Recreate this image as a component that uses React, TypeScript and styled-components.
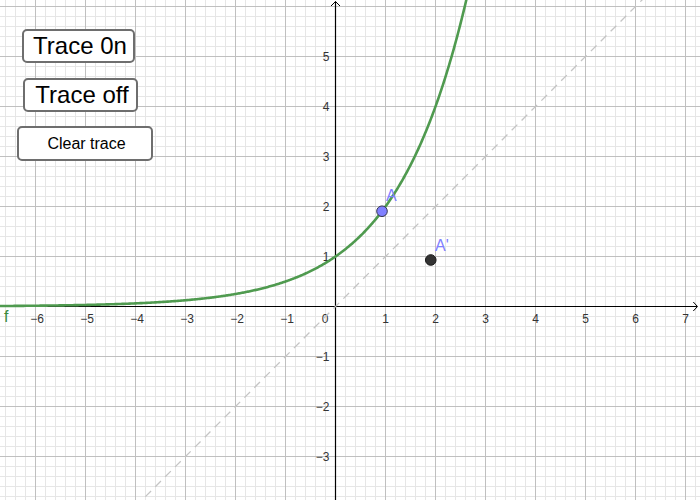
import React from "react";
import styled, { createGlobalStyle } from "styled-components";

const GlobalStyle = createGlobalStyle`
  html, body { margin: 0; padding: 0; background: #ffffff; }
  body { font-family: "Liberation Sans", Arial, sans-serif; }
`;

const W = 700;
const H = 500;
const OX = 335.5;
const OY = 306.5;
const U = 50;

const px = (x: number) => OX + x * U;
const py = (y: number) => OY - y * U;

const Canvas = styled.div`
  position: relative;
  width: ${W}px;
  height: ${H}px;
  overflow: hidden;
  background: #ffffff;
`;

const Graph = styled.svg`
  display: block;
  width: ${W}px;
  height: ${H}px;
  font-family: "Liberation Sans", Arial, sans-serif;
`;

const CanvasButton = styled.button<{ $x: number; $y: number; $w: number; $h: number; $size: number }>`
  position: absolute;
  left: ${(p) => p.$x}px;
  top: ${(p) => p.$y}px;
  width: ${(p) => p.$w}px;
  height: ${(p) => p.$h}px;
  box-sizing: border-box;
  margin: 0;
  padding: 0 0 0 3px;
  display: flex;
  align-items: center;
  justify-content: center;
  background: #ffffff;
  border: 2px solid #6e6e6e;
  border-radius: 5px;
  font-family: "Liberation Sans", Arial, sans-serif;
  font-size: ${(p) => p.$size}px;
  color: #000000;
  cursor: pointer;
`;

function gridLines() {
  const lines: React.ReactElement[] = [];
  for (let i = -40; i <= 40; i++) {
    const x = OX + i * 10;
    if (x < 0 || x > W) continue;
    if (i % 5 === 0) continue;
    lines.push(<line key={`mv${i}`} x1={x} y1={0} x2={x} y2={H} stroke="#e6e6e6" strokeWidth={1} />);
  }
  for (let i = -40; i <= 40; i++) {
    const y = OY + i * 10;
    if (y < 0 || y > H) continue;
    if (i % 5 === 0) continue;
    lines.push(<line key={`mh${i}`} x1={0} y1={y} x2={W} y2={y} stroke="#e6e6e6" strokeWidth={1} />);
  }
  for (let i = -8; i <= 8; i++) {
    const x = OX + i * U;
    if (x < 0 || x > W || i === 0) continue;
    lines.push(<line key={`Mv${i}`} x1={x} y1={0} x2={x} y2={H} stroke="#c0c0c0" strokeWidth={1} />);
  }
  for (let i = -8; i <= 8; i++) {
    const y = OY + i * U;
    if (y < 0 || y > H || i === 0) continue;
    lines.push(<line key={`Mh${i}`} x1={0} y1={y} x2={W} y2={y} stroke="#c0c0c0" strokeWidth={1} />);
  }
  return lines;
}

function curvePath() {
  const pts: string[] = [];
  for (let sx = 0; sx <= 470; sx += 1) {
    const x = (sx - OX) / U;
    const y = Math.pow(2, x);
    const syy = py(y);
    pts.push(`${sx === 0 ? "M" : "L"}${sx.toFixed(1)},${syy.toFixed(2)}`);
    if (syy < -5) break;
  }
  return pts.join(" ");
}

const xLabels = [-6, -5, -4, -3, -2, -1, 1, 2, 3, 4, 5, 6, 7];
const yLabels = [5, 4, 3, 2, 1, -1, -2, -3];
const fmt = (n: number) => (n < 0 ? `\u2212${-n}` : `${n}`);

export default function App() {
  const ax = 0.93;
  const ay = Math.pow(2, ax);
  return (
    <>
      <GlobalStyle />
      <Canvas>
        <Graph viewBox={`0 0 ${W} ${H}`}>
          <rect x={0} y={0} width={W} height={H} fill="#ffffff" />
          {gridLines()}
          <line x1={0} y1={OY} x2={697} y2={OY} stroke="#000" strokeWidth={1.2} />
          <line x1={OX} y1={1.5} x2={OX} y2={H} stroke="#000" strokeWidth={1.2} />
          <polyline points={`693.3,302 697.5,${OY} 693.3,311`} fill="none" stroke="#000" strokeWidth={1} />
          <polyline points={`331,6 ${OX},1.5 340,6`} fill="none" stroke="#000" strokeWidth={1} />
          {xLabels.map((n) => (
            <text key={`xl${n}`} x={px(n) + (n < 0 ? 1.5 : 0)} y={OY + 16} fontSize={12} fill="#333" textAnchor="middle">
              {fmt(n)}
            </text>
          ))}
          <text x={OX - 7} y={OY + 16} fontSize={12} fill="#333" textAnchor="end">0</text>
          {yLabels.map((n) => (
            <text key={`yl${n}`} x={OX - 6} y={py(n) + 4.5} fontSize={12} fill="#333" textAnchor="end">
              {fmt(n)}
            </text>
          ))}
          <line x1={px(-4)} y1={py(-4)} x2={px(6.5)} y2={py(6.5)} stroke="#c4c4c4" strokeWidth={1.3} strokeDasharray="8 6" />
          <path d={curvePath()} fill="none" stroke="#4f9a4f" strokeWidth={2.6} strokeLinejoin="round" />
          <text x={4} y={322} fontSize={16} fill="#3a8a3a">f</text>
          <circle cx={px(ax)} cy={py(ay)} r={5.3} fill="#8080ff" stroke="#33334d" strokeWidth={1} />
          <text x={386} y={201} fontSize={16} fill="#8080ff">A</text>
          <circle cx={px(ay)} cy={py(ax)} r={5.3} fill="#333333" stroke="#1a1a1a" strokeWidth={1} />
          <text x={435} y={251} fontSize={16} fill="#8080ff">A'</text>
        </Graph>
        <CanvasButton $x={22} $y={29} $w={113} $h={34} $size={24}>Trace 0n</CanvasButton>
        <CanvasButton $x={23} $y={78} $w={115} $h={34} $size={24}>Trace off</CanvasButton>
        <CanvasButton $x={17} $y={126} $w={136} $h={35} $size={16}>Clear trace</CanvasButton>
      </Canvas>
    </>
  );
}
